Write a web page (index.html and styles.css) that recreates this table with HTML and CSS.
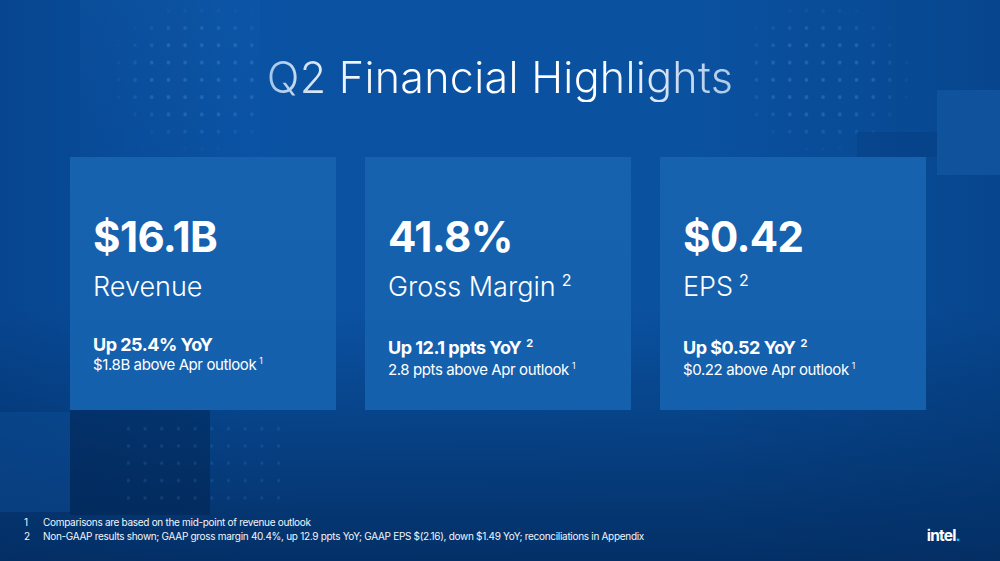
FILE: index.html
```html
<!DOCTYPE html>
<html lang="en">
<head>
<meta charset="utf-8">
<title>Q2 Financial Highlights</title>
<link rel="stylesheet" href="styles.css">
</head>
<body>
<div class="slide">
  <div class="decor d1"></div>
  <div class="decor d2"></div>
  <div class="decor d3"></div>
  <div class="decor d4"></div>
  <div class="decor d5"></div>
  <div class="decor d6"></div>
  <div class="decor d7"></div>
  <div class="decor d8"></div>

  <h1 class="title">Q2 Financial Highlights</h1>

  <div class="cards">
    <div class="card">
      <div class="value">$16.1B</div>
      <div class="label">Revenue</div>
      <div class="change">Up 25.4% YoY</div>
      <div class="note">$1.8B above Apr outlook<sup>1</sup></div>
    </div>
    <div class="card">
      <div class="value">41.8%</div>
      <div class="label">Gross Margin<sup>2</sup></div>
      <div class="change">Up 12.1 ppts YoY<sup>2</sup></div>
      <div class="note">2.8 ppts above Apr outlook<sup>1</sup></div>
    </div>
    <div class="card">
      <div class="value">$0.42</div>
      <div class="label">EPS<sup>2</sup></div>
      <div class="change">Up $0.52 YoY<sup>2</sup></div>
      <div class="note">$0.22 above Apr outlook<sup>1</sup></div>
    </div>
  </div>

  <div class="footer">
    <ol class="footnotes">
      <li><span class="num">1</span><span>Comparisons are based on the mid-point of revenue outlook</span></li>
      <li><span class="num">2</span><span>Non-GAAP results shown; GAAP gross margin 40.4%, up 12.9 ppts YoY; GAAP EPS $(2.16), down $1.49 YoY; reconciliations in Appendix</span></li>
    </ol>
    <div class="logo">intel<span class="dot">.</span></div>
  </div>
</div>
</body>
</html>
```
FILE: styles.css
```css
* { box-sizing: border-box; }
html, body { margin: 0; padding: 0; }
body {
  width: 1000px;
  height: 561px;
  overflow: hidden;
  font-family: Inter, "Liberation Sans", sans-serif;
  color: #fff;
  background: #053a7a;
}
.slide {
  position: relative;
  width: 1000px;
  height: 561px;
  overflow: hidden;
  display: flex;
  flex-direction: column;
  background:
    linear-gradient(180deg, rgba(11,82,163,0) 0%, rgba(3,44,96,0) 55%, rgba(3,44,96,0.9) 100%),
    linear-gradient(90deg, #07458f 0%, #0a52a3 25%, #0a51a0 70%, #07468e 100%);
}
.decor { position: absolute; pointer-events: none; }
.d1 {
  left: 80px; top: 0; width: 180px; height: 157px;
  background: linear-gradient(180deg, rgba(30,110,190,0.12), rgba(30,110,190,0.02));
}
.d2 {
  left: 110px; top: 2px; width: 155px; height: 150px;
  background-image: radial-gradient(circle, rgba(60,140,215,0.4) 1.6px, transparent 2.2px);
  background-size: 16.7px 17.3px;
  -webkit-mask-image: radial-gradient(ellipse at 60% 50%, #000 40%, transparent 75%);
  mask-image: radial-gradient(ellipse at 60% 50%, #000 40%, transparent 75%);
}
.d3 {
  left: 748px; top: 2px; width: 165px; height: 150px;
  background-image: radial-gradient(circle, rgba(60,140,215,0.4) 1.6px, transparent 2.2px);
  background-size: 16.7px 17.3px;
  -webkit-mask-image: radial-gradient(ellipse at 45% 50%, #000 40%, transparent 75%);
  mask-image: radial-gradient(ellipse at 45% 50%, #000 40%, transparent 75%);
}
.d4 {
  left: 937px; top: 90px; width: 63px; height: 85px;
  background: rgba(30,100,175,0.4);
}
.d5 {
  left: 857px; top: 132px; width: 80px; height: 25px;
  background: rgba(4,52,110,0.25);
}
.d6 {
  left: 0; top: 412px; width: 70px; height: 100px;
  background: rgba(14,78,150,0.45);
}
.d7 {
  left: 70px; top: 410px; width: 140px; height: 105px;
  background: rgba(1,30,70,0.4);
}
.d8 {
  left: 120px; top: 420px; width: 160px; height: 90px;
  background-image: radial-gradient(circle, rgba(40,110,190,0.3) 1.3px, transparent 2px);
  background-size: 16.7px 17.3px;
}
.title {
  position: relative;
  margin: 0;
  padding-top: 52px;
  height: 102px;
  font-weight: 300;
  font-size: 43px;
  line-height: 50px;
  letter-spacing: 0.3px;
  text-align: center;
  background: linear-gradient(90deg, transparent 0, transparent 262px, #9fc0e6 262px, #e8f1fb 330px, #ffffff 420px, #ffffff 600px, #c9dbf1 680px, #a8c5e8 740px, transparent 740px);
  -webkit-background-clip: text;
  background-clip: text;
  color: transparent;
}
.cards {
  position: relative;
  display: flex;
  gap: 29.5px;
  margin: 55px 0 0 70px;
}
.card {
  width: 265.5px;
  height: 253px;
  padding: 59px 0 0 23px;
  background: linear-gradient(180deg, #1662af 0%, #1460ad 100%);
  display: flex;
  flex-direction: column;
}
.value {
  font-weight: 700;
  font-size: 42px;
  line-height: 42px;
  letter-spacing: -0.6px;
  height: 42px;
}
.label {
  margin-top: 14px;
  font-weight: 300;
  font-size: 27px;
  line-height: 30px;
  letter-spacing: 0;
}
.label sup {
  font-size: 16px;
  vertical-align: 0;
  position: relative;
  top: -10px;
  margin-left: 6px;
  font-weight: 400;
}
.change {
  margin-top: 33px;
  font-weight: 700;
  font-size: 18px;
  line-height: 20px;
  letter-spacing: -0.5px;
}
.change sup {
  font-size: 11px;
  vertical-align: 0;
  position: relative;
  top: -7px;
  margin-left: 5px;
}
.note {
  font-weight: 400;
  font-size: 15px;
  line-height: 20px;
  letter-spacing: -0.4px;
}
.note sup {
  font-size: 8.5px;
  vertical-align: 0;
  position: relative;
  top: -6px;
  margin-left: 3px;
}
.footer {
  position: relative;
  margin-top: auto;
  height: 46px;
  display: flex;
  justify-content: space-between;
  align-items: flex-start;
  padding: 0 40px 0 24px;
}
.footnotes {
  list-style: none;
  margin: 0;
  padding: 0;
  font-size: 10px;
  line-height: 14px;
  letter-spacing: -0.3px;
  color: #f2f6fb;
}
.footnotes li { display: flex; }
.footnotes .num { width: 19px; }
.logo {
  margin-top: 12px;
  font-weight: 700;
  font-size: 15.5px;
  line-height: 17px;
  letter-spacing: -0.8px;
}
.logo .dot { color: #00c7fd; }
```
